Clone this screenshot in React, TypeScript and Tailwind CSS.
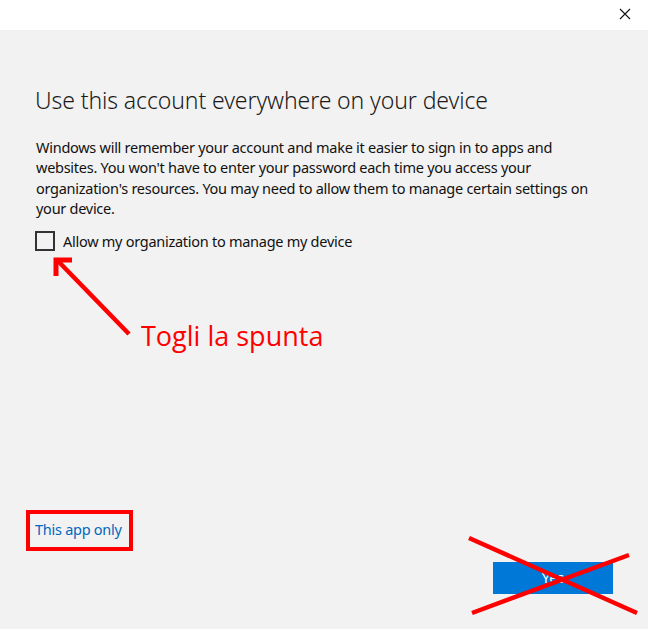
import React from "react";

export default function App() {
  return (
    <div className="relative w-[648px] h-[629px] overflow-hidden bg-[#f2f2f2]" style={{ fontFamily: '"Noto Sans", "Open Sans", sans-serif' }}>
      <div className="h-[30px] bg-white flex justify-end items-start">
        <svg width="12" height="12" viewBox="0 0 12 12" className="mt-[8px] mr-[17px]">
          <path d="M1 1 L11 11 M11 1 L1 11" stroke="#111" strokeWidth="1.1" fill="none" />
        </svg>
      </div>
      <div className="pl-[36px] pr-[36px] flex flex-col">
        <h1 className="mt-[55px] text-[23px] leading-[30px] text-[#1a1a1a] font-light tracking-[-0.1px] -ml-[1px]">Use this account everywhere on your device</h1>
        <p className="mt-[22px] text-[14.5px] leading-[20.3px] text-[#111] whitespace-nowrap tracking-[-0.27px]">
          Windows will remember your account and make it easier to sign in to apps and<br />
          websites. You won't have to enter your password each time you access your<br />
          organization's resources. You may need to allow them to manage certain settings on<br />
          your device.
        </p>
        <div className="mt-[13px] flex items-center gap-[8px] -ml-[1px]">
          <div className="w-[20px] h-[20px] border-2 border-[#333]" />
          <span className="text-[14.5px] leading-[20px] text-[#111] tracking-[-0.27px]">Allow my organization to manage my device</span>
        </div>
        <div className="mt-[67px] ml-[105px] text-[27px] leading-[36px] text-[#ff0000]" style={{ fontFamily: '"Open Sans", sans-serif' }}>Togli la spunta</div>
      </div>
      <div className="absolute left-[26px] top-[510px] w-[107px] h-[41px] border-[4px] border-[#ff0000] flex items-center pl-[5px] pb-[3px]">
        <span className="text-[14.5px] leading-[20px] text-[#0067c0] tracking-[-0.27px]">This app only</span>
      </div>
      <div className="absolute left-[493px] top-[562px] w-[120px] h-[32px] bg-[#0078d7] flex items-center justify-center">
        <span className="text-[14.5px] text-white">Yes</span>
      </div>
      <svg className="absolute left-0 top-0 pointer-events-none" width="648" height="629">
        <g stroke="#ff0000" strokeWidth="4.5" fill="none" strokeLinecap="butt">
          <line x1="129" y1="334" x2="58" y2="261" />
          <path d="M72 260 L56 260 L56 276" strokeWidth="5" strokeLinejoin="miter" />
          <line x1="469" y1="538" x2="637" y2="613" />
          <line x1="472" y1="613" x2="629" y2="555" />
        </g>
      </svg>
    </div>
  );
}
